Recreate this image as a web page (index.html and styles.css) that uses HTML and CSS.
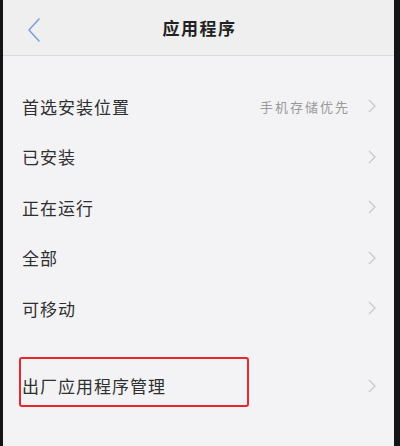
FILE: index.html
```html
<!DOCTYPE html>
<html lang="zh">
<head>
<meta charset="utf-8">
<link rel="stylesheet" href="styles.css">
</head>
<body>
<div class="screen">
  <header class="bar">
    <svg class="back" width="14" height="26" viewBox="0 0 14 26"><path d="M12 2 L2 13 L12 24" fill="none" stroke="#7f9fe0" stroke-width="1.6" stroke-linecap="round" stroke-linejoin="round"/></svg>
    <h1 class="title">应用程序</h1>
  </header>
  <div class="list">
    <div class="row"><span class="label">首选安装位置</span><span class="value">手机存储优先</span><svg class="chev" width="8" height="14" viewBox="0 0 8 14"><path d="M1 1 L7 7 L1 13" fill="none" stroke="#c8c8cc" stroke-width="1.3"/></svg></div>
    <div class="row"><span class="label">已安装</span><svg class="chev" width="8" height="14" viewBox="0 0 8 14"><path d="M1 1 L7 7 L1 13" fill="none" stroke="#c8c8cc" stroke-width="1.3"/></svg></div>
    <div class="row"><span class="label">正在运行</span><svg class="chev" width="8" height="14" viewBox="0 0 8 14"><path d="M1 1 L7 7 L1 13" fill="none" stroke="#c8c8cc" stroke-width="1.3"/></svg></div>
    <div class="row"><span class="label">全部</span><svg class="chev" width="8" height="14" viewBox="0 0 8 14"><path d="M1 1 L7 7 L1 13" fill="none" stroke="#c8c8cc" stroke-width="1.3"/></svg></div>
    <div class="row"><span class="label">可移动</span><svg class="chev" width="8" height="14" viewBox="0 0 8 14"><path d="M1 1 L7 7 L1 13" fill="none" stroke="#c8c8cc" stroke-width="1.3"/></svg></div>
  </div>
  <div class="list second">
    <div class="row"><span class="label">出厂应用程序管理</span><svg class="chev" width="8" height="14" viewBox="0 0 8 14"><path d="M1 1 L7 7 L1 13" fill="none" stroke="#c8c8cc" stroke-width="1.3"/></svg></div>
  </div>
  <div class="mark"></div>
</div>
</body>
</html>
```

FILE: styles.css
```css
html, body {
  margin: 0;
  padding: 0;
  background: #151515;
}
body {
  width: 400px;
  height: 446px;
  overflow: hidden;
  font-family: "Noto Sans CJK SC", "Noto Sans", sans-serif;
}
.screen {
  position: relative;
  margin-left: 3px;
  width: 391px;
  height: 446px;
  background: #f3f3f5;
  overflow: hidden;
}
.bar {
  position: relative;
  height: 55px;
  background: #efefef;
  border-bottom: 1px solid #dadada;
  display: flex;
  align-items: center;
  justify-content: center;
}
.back {
  position: absolute;
  left: 24px;
  top: 17px;
}
.title {
  margin: 0;
  font-size: 17px;
  font-weight: bold;
  letter-spacing: 1.5px;
  color: #222;
  padding-left: 2px;
}
.list {
  padding-top: 25px;
}
.list.second {
  padding-top: 27px;
}
.row {
  height: 50.5px;
  display: flex;
  align-items: center;
  padding: 0 18px 0 19px;
}
.label {
  flex: 1;
  font-size: 17px;
  letter-spacing: 1px;
  color: #2f2f2f;
}
.value {
  font-size: 13px;
  letter-spacing: 2px;
  color: #9a9a9a;
  margin-right: 18px;
}
.chev {
  flex: none;
}
.mark {
  position: absolute;
  left: 16px;
  top: 357px;
  width: 226px;
  height: 46px;
  border: 2px solid #e8262c;
  border-radius: 3px;
}
```
